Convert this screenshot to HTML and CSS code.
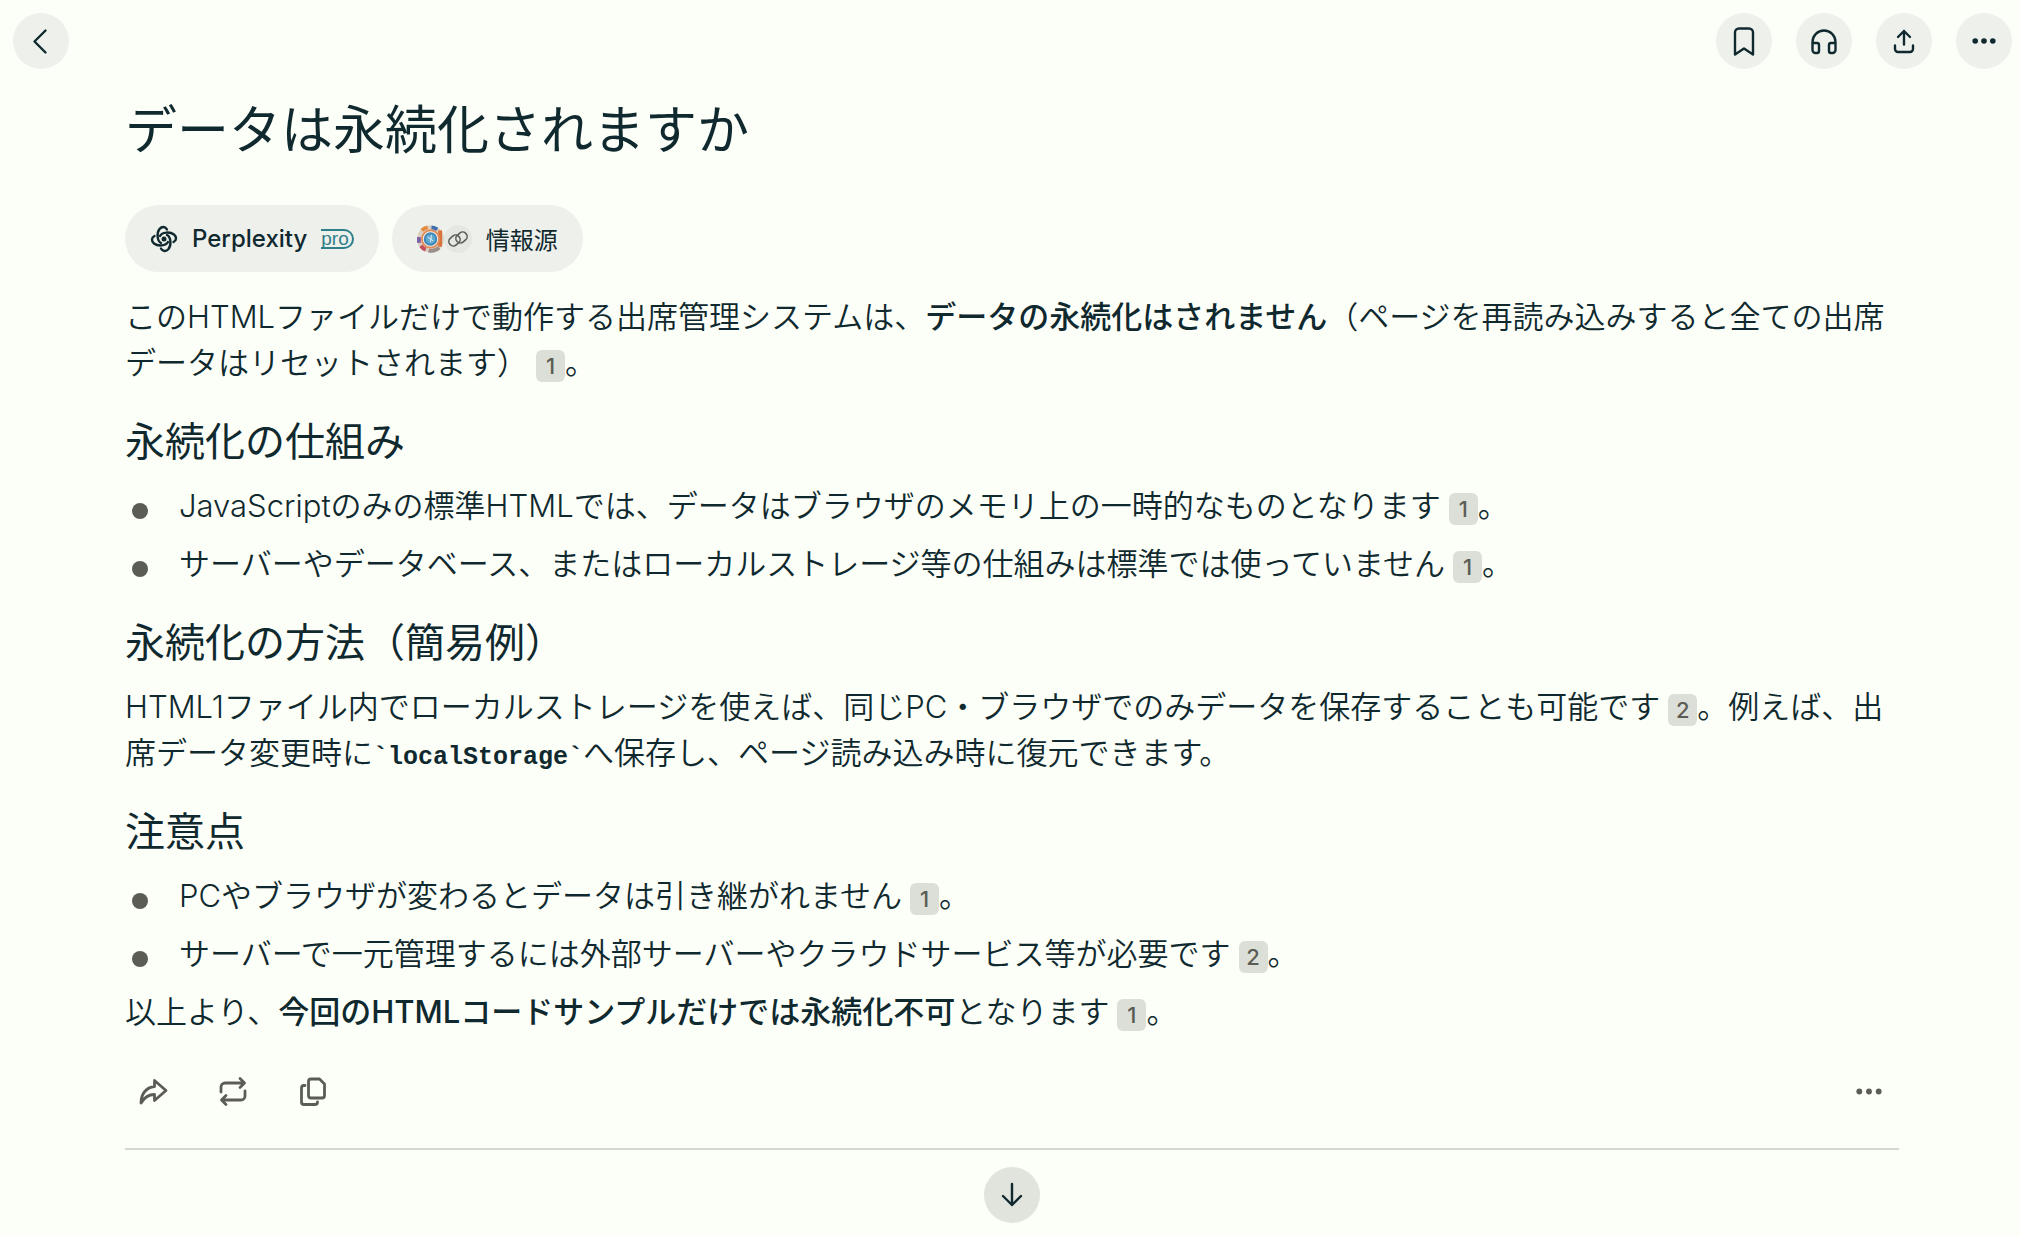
FILE: index.html
```
<!DOCTYPE html>
<html lang="ja">
<head>
  <meta charset="UTF-8" />
  <meta name="viewport" content="width=device-width, initial-scale=1" />
  <title>データは永続化されますか</title>
  <link rel="stylesheet" href="styles.css">
</head>
<body>
  <header class="topbar">
    <button class="round-btn" aria-label="戻る">
      <svg width="28" height="28" viewBox="0 0 28 28"><path d="M18.5 3.5l-11 11 11 11" /></svg>
    </button>
    <div class="topbar-actions">
      <button class="round-btn" aria-label="ブックマーク">
        <svg width="32" height="32" viewBox="0 0 32 32"><path d="M7 29.5v-22a4 4 0 0 1 4-4h10a4 4 0 0 1 4 4v22l-9-6z" /></svg>
      </button>
      <button class="round-btn" aria-label="読み上げ">
        <svg width="28" height="28" viewBox="0 0 28 28"><path d="M2.500 20v-5a11.500 11.500 0 0 1 23 0v5M2.500 16H7a2 2 0 0 1 2 2v6a2 2 0 0 1-2 2H5.500a3 3 0 0 1-3-3zM25.500 16H21a2 2 0 0 0-2 2v6a2 2 0 0 0 2 2h1.500a3 3 0 0 0 3-3z" /></svg>
      </button>
      <button class="round-btn" aria-label="共有">
        <svg width="28" height="28" viewBox="0 0 28 28"><path d="M14 17.5V4M8 10l6-6 6 6M5 18.5V22a3 3 0 0 0 3 3h12a3 3 0 0 0 3-3v-3.500" /></svg>
      </button>
      <button class="round-btn" aria-label="その他">
        <svg class="dots" width="28" height="28" viewBox="0 0 28 28"><circle cx="5.2" cy="14" r="2.8" /><circle cx="14" cy="14" r="2.8" /><circle cx="22.8" cy="14" r="2.8" /></svg>
      </button>
    </div>
  </header>

  <main class="thread">
    <h1>データは永続化されますか</h1>

    <div class="tabs">
      <button class="pill">
        <svg class="logo" width="28" height="28" viewBox="-14 -14 28 28">
          <circle class="logo-dot" r="2.5" />
          <path id="arm" d="M-4-3C-2-7 6-7.500 10-4.500c3 2.500 2.500 6-.5 7.500" />
          <use href="#arm" transform="rotate(90)" />
          <use href="#arm" transform="rotate(180)" />
          <use href="#arm" transform="rotate(270)" />
        </svg>
        <span>Perplexity</span>
        <span class="pro">pro</span>
      </button>
      <button class="pill">
        <span class="favicons">
          <svg class="site-icon" width="27" height="28" viewBox="0 0 28 28">
            <circle cx="14" cy="14" r="12" stroke="#dccfc2" stroke-width="4" />
            <path d="M5 5a12 12 0 0 1 6-3" stroke="#e58a3c" />
            <path d="M15 2a12 12 0 0 1 6 2" stroke="#3f6fb0" />
            <path d="M24 5v17" stroke="#d9743a" />
            <path d="M2 12v6" stroke="#7d62a8" />
            <path d="M4 21a12 12 0 0 0 5 4" stroke="#c24f5b" />
            <path d="M12 26a12 12 0 0 0 11-3" stroke="#9a8f8c" />
            <circle cx="14" cy="14" r="9" fill="#f4eee6" stroke="#e08a55" stroke-width="2" />
            <circle cx="14" cy="14" r="6" fill="#5fa8cf" stroke="#3f86b8" stroke-width="2" />
            <path d="M11 12l6 4M15 10l-1 7" stroke="#e6f1f5" stroke-width="1" />
          </svg>
          <svg class="link-icon" width="28" height="28" viewBox="0 0 28 28">
            <circle cx="14" cy="14" r="14" />
            <rect x="-6" y="-4.5" width="12" height="9" rx="4.5" transform="translate(10.500 15.500) rotate(-40)" />
            <rect x="-6" y="-4.5" width="12" height="9" rx="4.5" transform="translate(17.500 12.500) rotate(-40)" />
          </svg>
        </span>
        <span class="pill-label">情報源</span>
      </button>
    </div>

    <article class="answer">
      <p>このHTMLファイルだけで動作する出席管理システムは、<strong>データの永続化はされません</strong>（ページを再読み込みすると全ての出席データはリセットされます）<a class="cite" href="#">1</a>。</p>

      <h2>永続化の仕組み</h2>
      <ul>
        <li>JavaScriptのみの標準HTMLでは、データはブラウザのメモリ上の一時的なものとなります<a class="cite" href="#">1</a>。</li>
        <li>サーバーやデータベース、またはローカルストレージ等の仕組みは標準では使っていません<a class="cite" href="#">1</a>。</li>
      </ul>

      <h2>永続化の方法（簡易例）</h2>
      <p>HTML1ファイル内でローカルストレージを使えば、同じPC・ブラウザでのみデータを保存することも可能です<a class="cite" href="#">2</a>。例えば、出席データ変更時に<code>`localStorage`</code>へ保存し、ページ読み込み時に復元できます。</p>

      <h2>注意点</h2>
      <ul>
        <li>PCやブラウザが変わるとデータは引き継がれません<a class="cite" href="#">1</a>。</li>
        <li>サーバーで一元管理するには外部サーバーやクラウドサービス等が必要です<a class="cite" href="#">2</a>。</li>
      </ul>
      <p>以上より、<strong>今回のHTMLコードサンプルだけでは永続化不可</strong>となります<a class="cite" href="#">1</a>。</p>
    </article>

    <div class="actions">
      <button class="icon-btn" aria-label="共有">
        <svg width="32" height="32" viewBox="0 0 32 32"><path d="M17.500 5.500 29 15.500l-11.500 10v-6c-6 0-10 2.500-13.500 8.500 0-9 5-15.500 13.500-16.500z" /></svg>
      </button>
      <button class="icon-btn" aria-label="書き直す">
        <svg width="32" height="32" viewBox="0 0 32 32"><path d="M4 17v-5a4 4 0 0 1 4-4h19M23 3.500l4.500 4.500-4.500 4.500M28 16v5a4 4 0 0 1-4 4H5M9 20.500 4.500 25l4.500 4.500" /></svg>
      </button>
      <button class="icon-btn" aria-label="コピー">
        <svg width="32" height="32" viewBox="0 0 32 32"><path d="M14 4h8.500l5 5v11.500a2.500 2.500 0 0 1-2.500 2.500H14a2.500 2.500 0 0 1-2.500-2.500v-14A2.500 2.500 0 0 1 14 4zM8 10.500H7a2.500 2.500 0 0 0-2.500 2.500v14A2.500 2.500 0 0 0 7 29.500h11a2.500 2.500 0 0 0 2.500-2.500" /></svg>
      </button>
      <button class="icon-btn more" aria-label="その他">
        <svg class="dots" width="32" height="32" viewBox="0 0 32 32"><circle cx="6.3" cy="16.5" r="2.9" /><circle cx="16" cy="16.5" r="2.9" /><circle cx="25.7" cy="16.5" r="2.9" /></svg>
      </button>
    </div>

    <div class="scroll-down">
      <button class="round-btn round-btn-dark" aria-label="一番下へ">
        <svg width="28" height="28" viewBox="0 0 28 28"><path d="M14 3v21M5 15l9 9 9-9" /></svg>
      </button>
    </div>
  </main>
</body>
</html>
```
FILE: styles.css
```
* {
  box-sizing: border-box;
}

body {
  margin: 0;
  background: #fcfff7;
  color: #10292f;
  font-family: Inter, "Noto Sans CJK JP", sans-serif;
}

button {
  border: none;
  padding: 0;
  font: inherit;
  color: inherit;
  background: none;
  cursor: pointer;
}

svg {
  display: block;
  fill: none;
  stroke: currentColor;
  stroke-width: 2.4;
  stroke-linecap: round;
  stroke-linejoin: round;
}

.dots {
  fill: currentColor;
  stroke: none;
}

.topbar {
  display: flex;
  justify-content: space-between;
  padding: 13px 8px 0 13px;
}

.topbar-actions {
  display: flex;
  gap: 24px;
}

.round-btn {
  display: flex;
  align-items: center;
  justify-content: center;
  width: 56px;
  height: 56px;
  border-radius: 50%;
  background: #eef0eb;
}

.round-btn-dark {
  background: #e1e4dd;
}

.thread {
  padding: 0 121px 0 125px;
}

h1 {
  margin: 26px 0 38px;
  font-size: 52px;
  font-weight: 400;
  line-height: 72px;
}

.tabs {
  display: flex;
  gap: 13px;
}

.pill {
  display: flex;
  align-items: center;
  gap: 14px;
  height: 67px;
  padding: 0 25px;
  border-radius: 34px;
  background: #eef0eb;
  font-size: 24px;
  font-weight: 500;
}

.pill-label {
  font-weight: 400;
}

.logo-dot {
  fill: currentColor;
  stroke: none;
}

.pro {
  padding-right: 3px;
  border: 2px solid #2f7f8a;
  border-left: none;
  border-radius: 0 10px 10px 0;
  color: #2f7f8a;
  font-family: "Liberation Sans", sans-serif;
  font-size: 19px;
  font-weight: 400;
  line-height: 16px;
}

.favicons {
  display: flex;
}

.site-icon {
  stroke-width: 4;
  stroke-linecap: butt;
}

.link-icon {
  color: #5b5d57;
  stroke-width: 1.6;
}

.link-icon circle {
  fill: #e5e7e2;
  stroke: none;
}

.answer {
  padding-top: 22px;
  font-size: 31px;
  font-weight: 350;
  line-height: 46px;
}

.answer p,
.answer ul {
  margin: 0;
}

.answer h2 {
  margin: 30px 0 15px;
  font-size: 40px;
  font-weight: 400;
  line-height: 52px;
}

.answer strong {
  font-weight: 500;
}

.answer ul {
  padding: 0;
  list-style: none;
}

.answer li {
  margin-bottom: 12px;
  padding-left: 54px;
}

.answer li::before {
  content: "";
  float: left;
  width: 16px;
  height: 16px;
  margin: 20px 0 0 -47px;
  border-radius: 50%;
  background: #5b5d55;
}

.answer code {
  font-family: "Liberation Mono", monospace;
  font-size: 25px;
  font-weight: 700;
  line-height: 1;
}

.cite {
  display: inline-block;
  width: 29px;
  height: 32px;
  margin-left: 8px;
  border-radius: 6px;
  background: #dcdfd8;
  color: #5b5d55;
  font-size: 22px;
  font-weight: 500;
  line-height: 32px;
  text-align: center;
  text-decoration: none;
  vertical-align: middle;
}

.actions {
  display: flex;
  gap: 24px;
  padding: 27px 2px 28px 0;
  border-bottom: 2px solid #d5d8d1;
  color: #5b5d55;
}

.icon-btn {
  display: flex;
  align-items: center;
  justify-content: center;
  width: 56px;
  height: 58px;
}

.icon-btn svg {
  stroke-width: 2.8;
}

.more {
  margin-left: auto;
}

.scroll-down {
  display: flex;
  justify-content: center;
  padding: 17px 0 12px;
}
```
